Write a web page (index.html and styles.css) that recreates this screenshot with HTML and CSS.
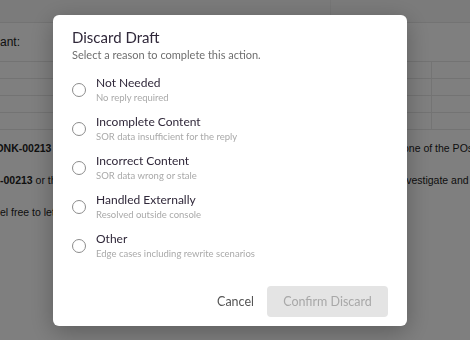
FILE: index.html
```html
<!DOCTYPE html>
<html>
<head>
<meta charset="utf-8">
<link rel="stylesheet" href="styles.css">
</head>
<body>
<div class="page">
  <div class="topbar"><div class="topcell"></div><div class="topcell narrow"></div></div>
  <div class="field">ant:</div>
  <div class="table">
    <div class="trow"><div class="tcell"></div><div class="tcell end"></div></div>
    <div class="trow"><div class="tcell"></div><div class="tcell end"></div></div>
    <div class="trow"><div class="tcell"></div><div class="tcell end"></div></div>
    <div class="trow"><div class="tcell"></div><div class="tcell end"></div></div>
  </div>
  <div class="para">
    <div class="line first"><span class="left"><b>DNK-00213</b> was flagged by the system</span><span class="right">one of the POs</span></div>
    <div class="line second"><span class="left"><b>-00213</b> or the related order</span><span class="right">investigate and</span></div>
    <div class="line third"><span class="left">el free to let us know</span><span class="right"></span></div>
  </div>
</div>

<div class="overlay">
  <div class="dialog">
    <h2 class="title">Discard Draft</h2>
    <p class="subtitle">Select a reason to complete this action.</p>
    <div class="options">
      <label class="option"><span class="radio"></span><span class="texts"><span class="label">Not Needed</span><span class="desc">No reply required</span></span></label>
      <label class="option"><span class="radio"></span><span class="texts"><span class="label">Incomplete Content</span><span class="desc">SOR data insufficient for the reply</span></span></label>
      <label class="option"><span class="radio"></span><span class="texts"><span class="label">Incorrect Content</span><span class="desc">SOR data wrong or stale</span></span></label>
      <label class="option"><span class="radio"></span><span class="texts"><span class="label">Handled Externally</span><span class="desc">Resolved outside console</span></span></label>
      <label class="option"><span class="radio"></span><span class="texts"><span class="label">Other</span><span class="desc">Edge cases including rewrite scenarios</span></span></label>
    </div>
    <div class="actions">
      <button class="btn cancel">Cancel</button>
      <button class="btn confirm" disabled>Confirm Discard</button>
    </div>
  </div>
</div>
</body>
</html>
```
FILE: styles.css
```css
* { box-sizing: border-box; }
html, body { margin: 0; padding: 0; }
body {
  width: 470px;
  height: 340px;
  overflow: hidden;
  background: #fff;
  font-family: "Liberation Sans", Arial, sans-serif;
  color: #222;
}
.page { width: 470px; height: 340px; overflow: hidden; }
.topbar {
  height: 23px;
  display: flex;
  border-bottom: 1px solid #e6e6e6;
  background: #f7f7f7;
}
.topcell { width: 331px; border-right: 1px solid #ececec; }
.topcell.narrow { flex: 1; border-right: none; }
.field {
  height: 39px;
  font-size: 12px;
  line-height: 39px;
  border-bottom: 1px solid #e6e6e6;
}
.trow {
  display: flex;
  height: 17px;
  border-bottom: 1px solid #e6e6e6;
}
.tcell { width: 432px; border-right: 1px solid #e9e9e9; }
.tcell.end { flex: 1; border-right: none; }
.para { padding-top: 10px; font-size: 10.5px; }
.line {
  display: grid;
  grid-template-columns: 403px 1fr;
  height: 32px;
  line-height: 16px;
  white-space: nowrap;
  overflow: hidden;
}
.line.second { grid-template-columns: 398px 1fr; }
.line .left { overflow: hidden; }
.line.first .left { margin-left: -4px; }
.line .right { overflow: hidden; }
.line b { font-weight: 700; }

.overlay {
  position: fixed;
  inset: 0;
  background: rgba(0, 0, 0, 0.5);
  display: flex;
  align-items: center;
  justify-content: center;
  padding-right: 10px;
}
.dialog {
  width: 354px;
  height: 311px;
  background: #fff;
  border-radius: 6px;
  box-shadow: 0 6px 24px rgba(0, 0, 0, 0.28);
  padding: 12px 19px 9px 19px;
  display: flex;
  flex-direction: column;
  font-family: Lato, "Open Sans", sans-serif;
}
.title {
  margin: 0;
  font-size: 15px;
  line-height: 20px;
  font-weight: 400;
  color: #30283a;
}
.subtitle {
  margin: 0;
  font-size: 11px;
  line-height: 16px;
  color: #6e6e6e;
}
.options {
  display: flex;
  flex-direction: column;
  gap: 7px;
  margin-top: 11px;
}
.option {
  display: flex;
  align-items: center;
  gap: 10px;
  height: 32px;
}
.radio {
  width: 14px;
  height: 14px;
  border: 1.5px solid #8c8c8c;
  border-radius: 50%;
  flex-shrink: 0;
}
.texts { display: flex; flex-direction: column; }
.label {
  font-size: 12px;
  line-height: 16px;
  color: #30283a;
}
.desc {
  font-size: 9.5px;
  line-height: 14px;
  color: #a9a9a9;
}
.actions {
  margin-top: auto;
  display: flex;
  justify-content: flex-end;
  align-items: center;
}
.btn {
  font-family: Lato, "Open Sans", sans-serif;
  font-size: 12.5px;
  border: none;
  background: none;
  height: 31px;
  padding: 0 13px;
  border-radius: 4px;
}
.cancel { color: #555; }
.confirm {
  background: #e4e4e4;
  color: #a8a8a8;
  width: 121px;
  padding: 0;
}
```
